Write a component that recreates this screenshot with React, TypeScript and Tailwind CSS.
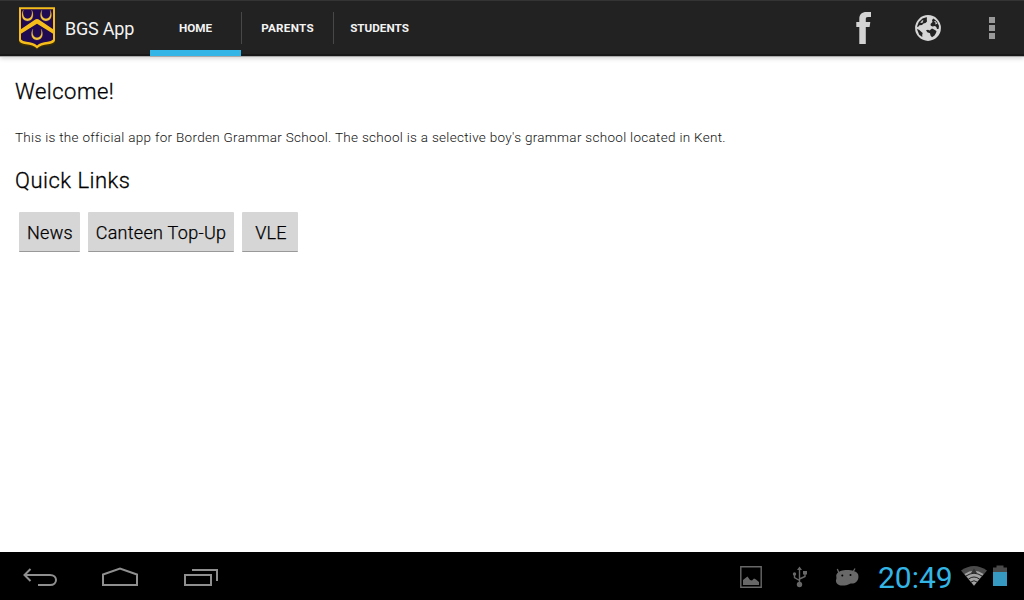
import React from "react";

function Crescent({ x, y }: { x: number; y: number }) {
  return (
    <path
      d="M5.300 2.800C3 7 3.500 13.700 9.500 13.700S16 7 13.700 2.800C14.800 8 13 11.400 9.500 11.400S4.200 8 5.300 2.800Z"
      transform={`translate(${x} ${y})`}
      fill="#f3c53c"
      stroke="#f3c53c"
      strokeWidth=".2"
    />
  );
}

function Crest() {
  return (
    <svg width="38" height="43" viewBox="0 0 38 43" className="block shrink-0">
      <path d="M1 1.2H37V36Q34 38.5 30 38.5Q23 38.5 19 42.2Q15 38.5 8 38.5Q4 38.5 1 36Z" fill="#3a2c08" transform="translate(0 .5)" />
      <path d="M1 .2H37V33.5Q36 36.8 30 37.3Q23 37.8 19 41.6Q15 37.8 8 37.3Q2 36.8 1 33.5Z" fill="#f5bd1a" />
      <path d="M3 2.300H35V32.500Q33.500 34.500 29.500 34.800Q22.500 35.400 19 38.600Q15.500 35.400 8.500 34.800Q4.500 34.500 3 32.500Z" fill="#200a52" />
      <path d="M2.500 22.500L16.500 13Q19 11 21.500 13L35.500 22.500V27L19 16.700L2.500 27Z" fill="#f5bd1a" />
      <Crescent x={0} y={0.3} />
      <Crescent x={18.5} y={0.3} />
      <Crescent x={9.5} y={19.3} />
    </svg>
  );
}

function Facebook() {
  return (
    <svg width="16" height="32" viewBox="0 0 16 32">
      <path d="M3.300 32V15H.3V10H3.300V7C3.300 2.200 5.800 0 10.500 0H15V5H12C10.200 5 9.800 5.700 9.800 7.400V10H14.300L13.600 15H9.800V32Z" fill="#d3d3d3" />
    </svg>
  );
}

function Globe() {
  return (
    <svg width="26" height="26" viewBox="0 0 26 26">
      <circle cx="13" cy="13" r="12.900" fill="#d6d6d6" />
      <g fill="#222">
        <path d="M2 11.500L3.800 7L7.500 3.600L10.500 2.500L12 2.300L11.800 4.500L12 6.500L10.500 8L8.500 8.500L7 10L4.500 10.300L3 12Z" />
        <path d="M1.900 14L4 14.800L6.500 17L7.700 18L7.200 20L7.300 22L4.200 19.800Z" />
        <path d="M15.500 8.900L17.500 7L17 5L18.500 3.500L22 6.500L24 11L23.500 14L22 14L21.300 12L20 11L17.500 11.400L15.800 10.800Z" />
        <path d="M11 15.200L13 14.800L14.500 15.500L17 13.500L19 14.500L21.500 16L21 18L19.500 20.500L17 22.300L15.500 20.500L15 18.200L12.300 17.200Z" />
      </g>
      <g fill="#cacaca">
        <path d="M5.200 7.800L7.200 5.300L8.500 5.500L7.400 8Z" />
        <path d="M18.800 6.500L20.500 6L22.500 8.800L20 9.500L20.700 7.800Z" />
      </g>
    </svg>
  );
}

function NavIcons() {
  return (
    <div className="flex items-center pt-[3px] text-[#8f8f8f]">
      <svg width="36" height="22" viewBox="0 0 36 22" fill="none" stroke="currentColor" strokeWidth="2" className="ml-[22px]">
        <path d="M8.500 2L2.500 8L8.500 14M2.500 8H28C36 8 36 18 28 18H16" />
      </svg>
      <svg width="38" height="22" viewBox="0 0 38 22" fill="none" stroke="currentColor" strokeWidth="2" className="ml-[43px]">
        <path d="M2 18V7.500L19 1.500L36 7.500V18Z" />
      </svg>
      <svg width="36" height="22" viewBox="0 0 36 22" fill="none" stroke="currentColor" strokeWidth="2" className="ml-[44px]">
        <path d="M2 8H28V18H2ZM9 3H34V14" />
      </svg>
    </div>
  );
}

function StatusIcons() {
  return (
    <div className="flex items-center pt-0.5 text-[#686868]">
      <svg width="22" height="22" viewBox="0 0 22 22">
        <path d="M.8.800H21.200V21.200H.8Z" fill="none" stroke="currentColor" strokeWidth="1.400" />
        <path d="M3 19V14L5.500 12L7.500 10.500L10 14L12 14.500L14 12.500L16 13.500L19 16V19Z" fill="currentColor" />
      </svg>
      <svg width="16" height="22" viewBox="0 0 16 22" fill="none" stroke="currentColor" strokeWidth="1.400" className="ml-[30px]">
        <path d="M7.500 3V18M2.500 8V11.500L7.500 14.500M13 7V10.500L7.500 13" />
        <path d="M7.500.5L10 4H5ZM11 5H15V8.500H11Z" fill="currentColor" stroke="none" />
        <circle cx="2.500" cy="8" r="1.700" fill="currentColor" stroke="none" />
        <circle cx="7.500" cy="18.500" r="2.700" fill="currentColor" stroke="none" />
      </svg>
      <svg width="24" height="22" viewBox="0 0 24 22" className="ml-[27px]">
        <path d="M4 7L2.300 3M18 6L20 2.500" stroke="currentColor" strokeWidth="1.300" />
        <path d="M1.300 9C2.500 5 8 4 12 4C17 4 21 5 23 8C24.500 13 22 17 18 17.500C14 17 13.500 19.500 8 19.500C4 20 .5 17.500 1 14C2 11.500 1 11 1.300 9Z" fill="currentColor" />
        <circle cx="7.300" cy="9.500" r="1" fill="#000" />
        <circle cx="15.500" cy="9" r="1" fill="#000" />
      </svg>
    </div>
  );
}

function SignalIcons() {
  return (
    <div className="flex items-center">
      <svg width="28" height="22" viewBox="0 0 28 22">
        <path d="M1 5.500Q14-3.500 27 5.500L14 21Z" fill="#4b4b4b" />
        <path d="M4.500 9Q14 2.500 23.500 9L14 20.500Z" fill="#a2a2a2" />
        <g fill="none" stroke="#000" strokeWidth=".8">
          <path d="M6 11Q14 5.500 22 11" />
          <path d="M8.500 14Q14 10 19.500 14" />
          <path d="M11 17Q14 14.500 17 17" />
        </g>
        <path d="M14 3.500L17 8H11Z" fill="#333" />
      </svg>
      <svg width="14" height="22" viewBox="0 0 14 22" className="ml-[5px]">
        <path d="M3.500 .5H10.500V2.500H14V7H0V2.500H3.500Z" fill="#494949" />
        <path d="M0 7H14V21H0Z" fill="#3699c2" />
      </svg>
    </div>
  );
}

const tab = "flex h-full items-center justify-center pt-px text-[11.7px] font-bold text-[#f3f3f3]";

export default function App() {
  return (
    <div className="flex h-[600px] w-[1024px] flex-col overflow-hidden bg-white font-[Roboto,sans-serif]">
      <header className="z-10 flex h-14 shrink-0 border-t border-b-2 border-t-[#343434] border-b-[#181818] bg-[#222] shadow-[0_1px_0_#aaa,0_2px_5px_rgba(0,0,0,.2)]">
        <div className="flex w-[150px] pl-[18px] pt-[6px]">
          <Crest />
          <h1 className="ml-[9px] mt-[8px] whitespace-nowrap text-[18px] leading-[28px] tracking-[-0.22px] text-[#f3f3f3]">BGS App</h1>
        </div>
        <nav className="-mb-0.5 flex h-[55px]">
          <div className="w-[91px] border-b-[6px] border-[#33b5e5]">
            <div className="flex h-[54px] items-center justify-center pt-px text-[11.7px] font-bold text-[#f3f3f3]">HOME</div>
          </div>
          <div className="mt-[11px] h-8 w-px bg-[#484848]" />
          <div className="h-[54px] w-[91px]"><div className={tab}><span className="tracking-[0.25px]">PARENTS</span></div></div>
          <div className="mt-[11px] h-8 w-px bg-[#484848]" />
          <div className="h-[54px] w-[91px]"><div className={tab}>STUDENTS</div></div>
        </nav>
        <div className="ml-auto flex h-[54px] items-center">
          <Facebook />
          <div className="ml-[43px]"><Globe /></div>
          <div className="ml-[48px] mr-[29px] flex flex-col gap-0.5">
            <i className="size-1.5 bg-[#999]" />
            <i className="size-1.5 bg-[#999]" />
            <i className="size-1.5 bg-[#999]" />
          </div>
        </div>
      </header>
      <main className="flex-1 px-[15px] pt-[21px] text-black">
        <h2 className="text-[22px] font-light leading-[30px] tracking-[0.5px] [-webkit-text-stroke:0.3px_black]">Welcome!</h2>
        <p className="mt-[20px] whitespace-nowrap text-[13.5px] font-light leading-[20px] tracking-[0.3px] text-[#111]">
          This is the official app for Borden Grammar School. The school is a selective boy's grammar school located in Kent.
        </p>
        <h2 className="mt-[19px] text-[22px] font-light leading-[30px] tracking-[0.5px] [-webkit-text-stroke:0.3px_black]">Quick Links</h2>
        <div className="ml-1 mt-[16px] flex gap-2 text-[18px] font-light tracking-[0.3px] [-webkit-text-stroke:0.25px_black]">
          <button className="h-10 w-[61px] rounded-[1px] border-b border-[#999] bg-[#d6d6d6] pl-px pt-0.5">News</button>
          <button className="h-10 w-[146px] whitespace-nowrap rounded-[1px] border-b border-[#999] bg-[#d6d6d6] pt-0.5">Canteen Top-Up</button>
          <button className="h-10 w-[56px] rounded-[1px] border-b border-[#999] bg-[#d6d6d6] pl-0.5 pt-0.5">VLE</button>
        </div>
      </main>
      <footer className="flex h-12 shrink-0 items-center bg-black">
        <NavIcons />
        <div className="ml-auto mr-[17px] flex items-center">
          <StatusIcons />
          <span className="ml-[19px] w-[82px] whitespace-nowrap pt-1 text-[30px] leading-[44px] text-[#33b5e5]">20:49</span>
          <SignalIcons />
        </div>
      </footer>
    </div>
  );
}
